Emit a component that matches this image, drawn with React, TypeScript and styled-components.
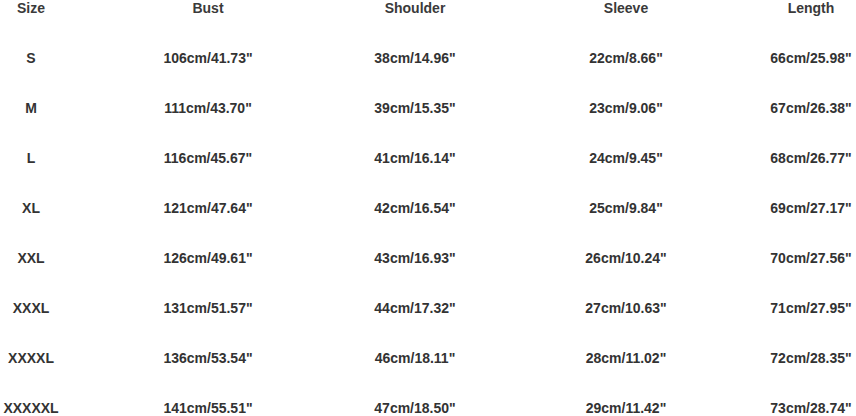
import { createGlobalStyle } from 'styled-components';
import styled from 'styled-components';

const GlobalStyle = createGlobalStyle`
  html, body {
    margin: 0;
    padding: 0;
    background: #ffffff;
    overflow: hidden;
  }
`;

const Chart = styled.div`
  width: 856px;
  height: 416px;
  display: grid;
  grid-template-columns: 62px 292px 122px 300px 70px;
  grid-template-rows: 33px repeat(8, 50px);
  font-family: 'Liberation Sans', Arial, sans-serif;
  font-weight: bold;
  font-size: 14px;
  color: #333333;
`;

const Cell = styled.div<{ $head?: boolean }>`
  display: flex;
  align-items: ${(p) => (p.$head ? 'flex-start' : 'center')};
  justify-content: center;
  white-space: nowrap;
  line-height: 16px;
  color: ${(p) => (p.$head ? '#3a3a3a' : '#333333')};
`;

const headers = ['Size', 'Bust', 'Shoulder', 'Sleeve', 'Length'];

const rows = [
  ['S', '106cm/41.73"', '38cm/14.96"', '22cm/8.66"', '66cm/25.98"'],
  ['M', '111cm/43.70"', '39cm/15.35"', '23cm/9.06"', '67cm/26.38"'],
  ['L', '116cm/45.67"', '41cm/16.14"', '24cm/9.45"', '68cm/26.77"'],
  ['XL', '121cm/47.64"', '42cm/16.54"', '25cm/9.84"', '69cm/27.17"'],
  ['XXL', '126cm/49.61"', '43cm/16.93"', '26cm/10.24"', '70cm/27.56"'],
  ['XXXL', '131cm/51.57"', '44cm/17.32"', '27cm/10.63"', '71cm/27.95"'],
  ['XXXXL', '136cm/53.54"', '46cm/18.11"', '28cm/11.02"', '72cm/28.35"'],
  ['XXXXXL', '141cm/55.51"', '47cm/18.50"', '29cm/11.42"', '73cm/28.74"'],
];

export default function App() {
  return (
    <>
      <GlobalStyle />
      <Chart>
        {headers.map((h) => (
          <Cell $head key={h}>
            {h}
          </Cell>
        ))}
        {rows.map((row) =>
          row.map((value, i) => <Cell key={row[0] + i}>{value}</Cell>)
        )}
      </Chart>
    </>
  );
}
